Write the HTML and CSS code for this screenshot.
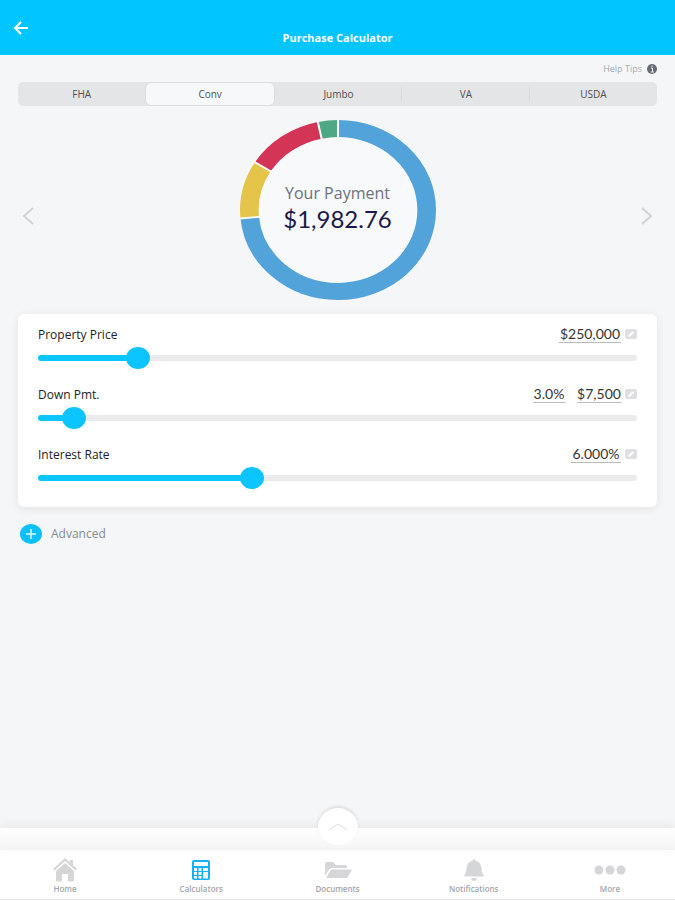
FILE: index.html
```html
<!DOCTYPE html>
<html lang="en">
<head>
  <meta charset="UTF-8" />
  <meta name="viewport" content="width=device-width, initial-scale=1.0" />
  <title>Purchase Calculator</title>
  <link rel="stylesheet" href="styles.css">
</head>
<body>

  <header>
    <button type="button" class="back" aria-label="Back">
      <svg width="16" height="14" viewBox="0 0 16 14"><path d="M15 7H2M8 1L2 7l6 6" /></svg>
    </button>
    <h1>Purchase Calculator</h1>
  </header>

  <main>
    <a href="#" class="help">Help Tips
      <svg width="10" height="10" viewBox="0 0 10 10"><circle cx="5" cy="5" r="5" fill="#686b72" /><path d="M4 4h1.500v4M3.800 8h3M5 1.500v1.300" stroke="#f4f6f8" fill="none" /></svg>
    </a>

    <div class="tabs">
      <button type="button">FHA</button>
      <button type="button" class="active">Conv</button>
      <button type="button">Jumbo</button>
      <button type="button">VA</button>
      <button type="button">USDA</button>
    </div>

    <section class="payment">
      <button type="button" class="arrow" aria-label="Previous">
        <svg width="12" height="18" viewBox="0 0 12 18"><path d="M11 1L2 9l9 8" /></svg>
      </button>
      <div class="chart">
        <svg viewBox="-100 -100 200 200" preserveAspectRatio="none">
          <circle r="90" fill="#f7f9fa" />
          <g class="ring" transform="rotate(-90)">
            <circle r="90.500" pathLength="1000" stroke="#52a3d9" stroke-dasharray="735 265" />
            <circle r="90.500" pathLength="1000" stroke="#e4c54a" stroke-dasharray="104 896" stroke-dashoffset="-735" />
            <circle r="90.500" pathLength="1000" stroke="#d33556" stroke-dasharray="128 872" stroke-dashoffset="-839" />
            <circle r="90.500" pathLength="1000" stroke="#4da883" stroke-dasharray="33 967" stroke-dashoffset="-967" />
          </g>
          <g class="gaps">
            <path d="M0 -80V-101" />
            <path d="M0 -80V-101" transform="rotate(264.600)" />
            <path d="M0 -80V-101" transform="rotate(302)" />
            <path d="M0 -80V-101" transform="rotate(348.100)" />
          </g>
        </svg>
        <div class="total">
          <span>Your Payment</span>
          <strong>$1,982.76</strong>
        </div>
      </div>
      <button type="button" class="arrow" aria-label="Next">
        <svg width="12" height="18" viewBox="0 0 12 18"><path d="M1 1l9 8-9 8" /></svg>
      </button>
    </section>

    <form class="card">
      <div class="field">
        <div class="row">
          <label for="price">Property Price</label>
          <input type="text" class="value wide" value="$250,000" aria-label="Property price amount">
          <svg class="edit" viewBox="0 0 12 10"><rect width="12" height="10" rx="2" /><path d="M3.500 7.500L8.500 3" /></svg>
        </div>
        <input type="range" id="price" min="0" max="1000" value="153" style="--v: 0.153">
      </div>
      <div class="field">
        <div class="row">
          <label for="down">Down Pmt.</label>
          <input type="text" class="value short" value="3.0%" aria-label="Down payment percent">
          <input type="text" class="value mid" value="$7,500" aria-label="Down payment amount">
          <svg class="edit" viewBox="0 0 12 10"><rect width="12" height="10" rx="2" /><path d="M3.500 7.500L8.500 3" /></svg>
        </div>
        <input type="range" id="down" min="0" max="1000" value="42" style="--v: 0.042">
      </div>
      <div class="field">
        <div class="row">
          <label for="rate">Interest Rate</label>
          <input type="text" class="value rate" value="6.000%" aria-label="Interest rate percent">
          <svg class="edit" viewBox="0 0 12 10"><rect width="12" height="10" rx="2" /><path d="M3.500 7.500L8.500 3" /></svg>
        </div>
        <input type="range" id="rate" min="0" max="1000" value="351" style="--v: 0.351">
      </div>
    </form>

    <button type="button" class="advanced">
      <svg width="22" height="20" viewBox="0 0 22 20"><ellipse cx="11" cy="10" rx="11" ry="10" fill="#0cc0fb" /><path d="M6 10h10M11 5v10" stroke="#e4f8ff" stroke-width="1.500" /></svg>
      Advanced
    </button>
  </main>

  <div class="drawer">
    <button type="button" class="knob" aria-label="Open summary">
      <svg width="20" height="8" viewBox="0 0 20 8"><path d="M1 7l9-6 9 6" /></svg>
    </button>
  </div>

  <nav>
    <a href="#">
      <svg width="26" height="24" viewBox="0 0 26 24"><path d="M13 0L1 11l1.500 1.500L13 3l10.500 9.500L25 11l-4-3.700V2h-3v2.600z" /><path d="M13 5L4 13v9.500q0 1 1 1h5V16h6v7.500h5q1 0 1-1V13z" /></svg>
      Home
    </a>
    <a href="#">
      <svg width="26" height="24" viewBox="0 0 26 24">
        <rect x="4" y="2" width="18" height="20" rx="2" fill="#12b3f5" />
        <path d="M6 4h14v4H6zM6 10h3v3H6zM10.500 10h3v3h-3zM15 10h5v3h-5zM6 14h3v3H6zM10.500 14h3v3h-3zM6 18h3v2.500H6zM10.500 18h3v2.500h-3zM15 14h5v6.500h-5z" fill="#fff" />
      </svg>
      Calculators
    </a>
    <a href="#">
      <svg width="28" height="24" viewBox="0 0 28 24"><path d="M1 18V6q0-2 2-2h6l3 3h9q2 0 2 2v1H8q-2 0-3 1.500z" /><path d="M2 20l4.500-7.500Q7 11.500 8.500 11.500H27q1 0 .5 1L24 19q-.6 1-2 1z" /></svg>
      Documents
    </a>
    <a href="#">
      <svg width="26" height="24" viewBox="0 0 26 24"><path d="M13 1q1.500 0 1.500 1.800Q20 4.500 20.500 10q.3 6 3 8.500H2.500q2.700-2.500 3-8.500Q6 4.500 11.500 2.800 11.500 1 13 1zM10 20h6q-.5 3-3 3t-3-3z" /></svg>
      Notifications
    </a>
    <a href="#">
      <svg width="34" height="24" viewBox="0 0 34 24"><circle cx="6" cy="12" r="4.500" /><circle cx="17" cy="12" r="4.500" /><circle cx="28" cy="12" r="4.500" /></svg>
      More
    </a>
  </nav>

</body>
</html>
```
FILE: styles.css
```css
* {
  box-sizing: border-box;
}
body {
  font-family: 'Open Sans', 'Noto Sans', sans-serif;
  background: #f4f6f8;
  margin: 0;
  min-height: 100vh;
  display: flex;
  flex-direction: column;
}
button {
  background: none;
  border: none;
  padding: 0;
  font-family: inherit;
  cursor: pointer;
}
svg {
  display: block;
}
header {
  display: grid;
  grid-template-columns: 1fr auto 1fr;
  height: 55px;
  padding: 0 13px;
  background: #00c5ff;
  color: white;
}
header h1 {
  margin: 28px 0 0;
  font-size: 11px;
  line-height: 20px;
  font-weight: 700;
}
.back {
  justify-self: start;
  align-self: center;
}
.back path {
  fill: none;
  stroke: #fff;
  stroke-width: 2;
}
main {
  flex: 1;
  display: flex;
  flex-direction: column;
  padding: 6px 18px;
}
.help {
  align-self: flex-end;
  display: flex;
  align-items: center;
  gap: 5px;
  font-size: 9px;
  line-height: 16px;
  color: #a9adb1;
  text-decoration: none;
}
.tabs {
  display: flex;
  margin-top: 5px;
  height: 24px;
  background: #e4e5e6;
  border-radius: 5px;
}
.tabs button {
  flex: 1;
  font-size: 10px;
  color: #4e5052;
  /* short divider on the right edge */
  background: linear-gradient(#d9dadb, #d9dadb) right center / 1px 14px no-repeat;
}
.tabs button:first-child,
.tabs button:last-child {
  background: none;
}
.tabs .active {
  background: #f6f8fa;
  border: 1px solid #dadcde;
  border-radius: 6px;
}
.payment {
  display: flex;
  justify-content: space-between;
  align-items: center;
  margin-top: 14px;
  padding: 0 4px;
}
.arrow {
  padding-top: 12px;
}
.arrow path,
.knob path {
  fill: none;
  stroke: #d0d2d4;
  stroke-width: 2;
}
.knob path {
  stroke: #dcdddf;
  stroke-width: 1;
}
.chart {
  display: grid;
  width: 196px;
  height: 180px;
}
.chart > * {
  grid-area: 1 / 1;
}
.chart svg {
  width: 100%;
  height: 100%;
}
.ring circle {
  fill: none;
  stroke-width: 19;
}
.gaps path {
  stroke: #fff;
  stroke-width: 2;
}
.total {
  align-self: center;
  display: flex;
  flex-direction: column;
  align-items: center;
  padding-bottom: 6px;
}
.total span {
  font-size: 16px;
  line-height: 24px;
  color: #6d7178;
}
.total strong {
  font-family: Lato, sans-serif;
  font-size: 24px;
  line-height: 28px;
  font-weight: 400;
  color: #1c1a4b;
}
.card {
  margin-top: 14px;
  padding: 10px 20px 18px;
  display: flex;
  flex-direction: column;
  gap: 15px;
  background: white;
  border-radius: 6px;
  box-shadow: 0 2px 10px rgba(0, 0, 0, 0.08);
}
.row {
  display: flex;
  align-items: center;
  height: 20px;
}
.row label {
  flex: 1;
  font-size: 12px;
  color: #222;
}
.value {
  margin-left: 12px;
  height: 18px;
  padding: 0;
  border: none;
  border-bottom: 1px solid #bbb;
  background: none;
  font-family: Lato, sans-serif;
  font-size: 14px;
  text-align: center;
  color: #333;
}
.wide {
  width: 62px;
}
.rate {
  width: 50px;
}
.mid {
  width: 44px;
}
.short {
  width: 32px;
}
.edit {
  width: 12px;
  height: 10px;
  margin-left: 4px;
  fill: #dddfe0;
}
.edit path {
  stroke: #fff;
  stroke-width: 2;
}
input[type="range"] {
  --fill: calc(12px + (100% - 24px) * var(--v));
  display: block;
  appearance: none;
  width: 100%;
  height: 22px;
  margin: 3px 0 0;
  background: none;
}
input[type="range"]::-webkit-slider-runnable-track {
  height: 6px;
  border-radius: 3px;
  background: linear-gradient(to right, #0cc5ff var(--fill), #e9eaeb var(--fill));
}
input[type="range"]::-webkit-slider-thumb {
  appearance: none;
  width: 24px;
  height: 22px;
  margin-top: -8px;
  border-radius: 50%;
  background: #0cc5ff;
}
.advanced {
  align-self: flex-start;
  display: flex;
  align-items: center;
  gap: 9px;
  margin: 17px 2px;
  font-size: 12px;
  line-height: 20px;
  color: #888b90;
}
.drawer {
  position: relative;
  height: 22px;
  background: linear-gradient(#fff, #f4f4f4);
  box-shadow: 0 -3px 12px rgba(0, 0, 0, 0.06);
}
/* the knob sits over the top edge of the drawer */
.knob {
  position: absolute;
  top: -20px;
  left: 50%;
  width: 40px;
  height: 37px;
  transform: translateX(-50%);
  display: flex;
  align-items: center;
  justify-content: center;
  border-radius: 50%;
  background: #fff;
  box-shadow: 0 -2px 3px rgba(0, 0, 0, 0.1);
}
nav {
  display: flex;
  justify-content: space-between;
  padding: 8px 10px 3px;
  background: white;
  border-bottom: 1px solid #e4e5e6;
}
nav a {
  width: 110px;
  display: flex;
  flex-direction: column;
  align-items: center;
  font-size: 8px;
  line-height: 14px;
  font-weight: 600;
  color: #a3a6a9;
  fill: #d5d6d8;
  text-decoration: none;
}
```
